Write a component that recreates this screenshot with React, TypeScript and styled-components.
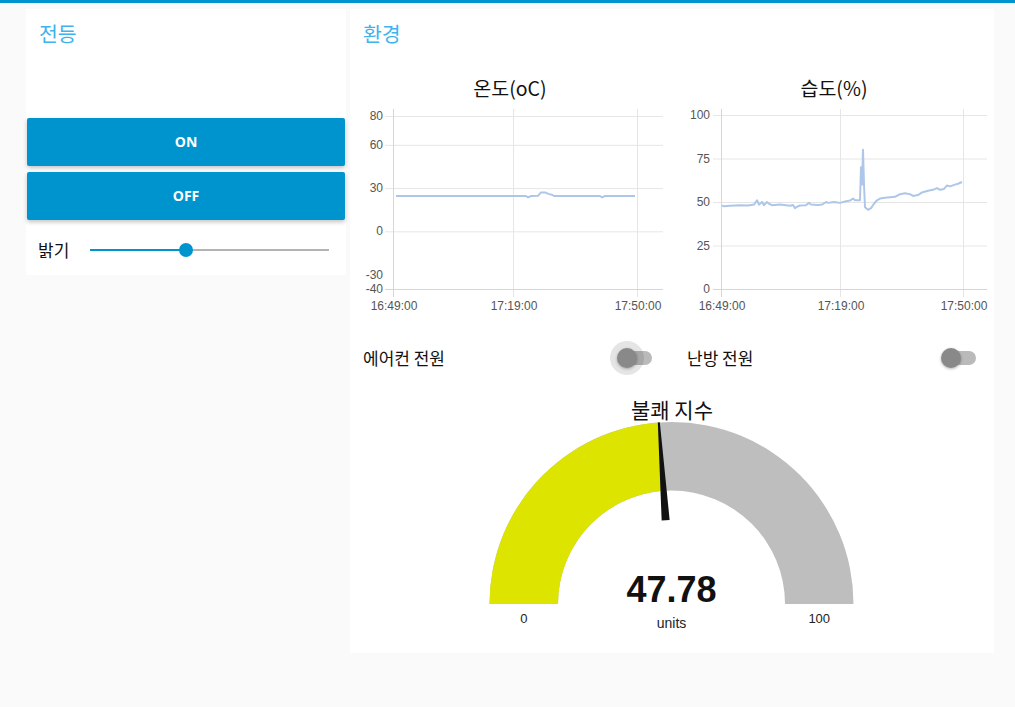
import React from "react";
import styled, { createGlobalStyle } from "styled-components";

const GlobalStyle = createGlobalStyle`
  html, body { margin: 0; padding: 0; background: #fafafa; }
  body { font-family: "Noto Sans CJK KR", "Noto Sans", sans-serif; color: #111; }
  * { box-sizing: border-box; }
`;

const TopBar = styled.div`
  height: 3px;
  background: #0094ce;
`;

const Layout = styled.main`
  display: flex;
  align-items: flex-start;
  gap: 4px;
  padding: 6px 0 0 26px;
`;

const Card = styled.section<{ $width: number }>`
  width: ${(p) => p.$width}px;
  background: #fff;
  padding: 0 1px 1px;
  display: flex;
  flex-direction: column;
  gap: 6px;
`;

const CardTitle = styled.h2`
  margin: 0;
  height: 49px;
  padding: 12px 12px 0;
  font-size: 20.5px;
  line-height: 24px;
  font-weight: 400;
  color: #3fb3ee;
`;

const Spacer = styled.div`
  height: 48px;
`;

const ActionButton = styled.button`
  height: 48px;
  width: 100%;
  border: 0;
  border-radius: 2px;
  background: #0094ce;
  color: #fff;
  font: 700 14px "Open Sans", "Liberation Sans", sans-serif;
  line-height: 46px;
  box-shadow: 0 2px 4px rgba(0, 0, 0, 0.24);
  cursor: pointer;
`;

const SliderRow = styled.div`
  height: 48px;
  display: flex;
  align-items: center;
  padding: 0 16px 0 11px;
`;

const WidgetLabel = styled.span<{ $width?: number }>`
  font-size: 17px;
  line-height: 20px;
  color: #111;
  ${(p) => (p.$width ? `width: ${p.$width}px; flex: none;` : "")}
`;

const SliderTrack = styled.div`
  position: relative;
  flex: 1;
  height: 2px;
  background: #b3b3b3;
`;

const SliderFill = styled.div<{ $value: number }>`
  width: ${(p) => p.$value}%;
  height: 100%;
  background: #0094ce;
`;

const SliderThumb = styled.div<{ $value: number }>`
  position: absolute;
  left: ${(p) => p.$value}%;
  top: 50%;
  width: 14px;
  height: 14px;
  margin: -7px 0 0 -7px;
  border-radius: 50%;
  background: #0094ce;
`;

const TwoColumns = styled.div<{ $height: number }>`
  display: grid;
  grid-template-columns: 318px 318px;
  column-gap: 6px;
  height: ${(p) => p.$height}px;
`;

const ChartWidget = styled.div`
  display: flex;
  flex-direction: column;
  height: 264px;
`;

const ChartTitle = styled.div`
  height: 44px;
  padding-top: 4px;
  line-height: 40px;
  text-align: center;
  font-size: 19.5px;
  color: #111;
`;

const ChartSvg = styled.svg`
  display: block;
  overflow: visible;
`;

const ToggleWidget = styled.div`
  height: 48px;
  display: flex;
  align-items: center;
  justify-content: space-between;
  padding: 0 17px 0 12px;
`;

const SwitchTrack = styled.span`
  position: relative;
  display: block;
  width: 34px;
  height: 14px;
  border-radius: 7px;
  background: #bababa;
`;

const SwitchThumb = styled.span<{ $focused?: boolean }>`
  position: absolute;
  left: -1px;
  top: -3px;
  width: 20px;
  height: 20px;
  border-radius: 50%;
  background: #898989;
  box-shadow: 0 1px 3px rgba(0, 0, 0, 0.3)
    ${(p) => (p.$focused ? ", 0 0 0 7px rgba(0, 0, 0, 0.1)" : "")};
`;

const GaugeWidget = styled.div`
  height: 264px;
  display: flex;
  flex-direction: column;
`;

const GaugeTitle = styled.div`
  height: 42px;
  line-height: 42px;
  text-align: center;
  font-size: 21px;
  color: #111;
`;

type YTick = { v: number; label: string; grid: boolean };
type XTick = { x: number; label: string };

type ChartProps = {
  title: string;
  left: number;
  right: number;
  top: number;
  bottom: number;
  min: number;
  max: number;
  labelX: number;
  yTicks: YTick[];
  xTicks: XTick[];
  points: [number, number][];
};

const Chart: React.FC<ChartProps> = ({ title, left, right, top, bottom, min, max, labelX, yTicks, xTicks, points }) => {
  const y = (v: number) => top + ((max - v) * (bottom - top)) / (max - min);
  const line = points.map(([x, v]) => `${x},${y(v).toFixed(2)}`).join(" ");
  return (
    <ChartWidget>
      <ChartTitle>{title}</ChartTitle>
      <ChartSvg width={318} height={220} viewBox="0 0 318 220">
        {yTicks
          .filter((t) => t.grid)
          .map((t) => (
            <line key={`g${t.v}`} x1={left - 8} x2={right} y1={y(t.v) + 0.5} y2={y(t.v) + 0.5} stroke="#e6e6e6" strokeWidth={1} />
          ))}
        {xTicks.map((t) => (
          <line key={`v${t.x}`} x1={t.x + 0.5} x2={t.x + 0.5} y1={1} y2={bottom + 8} stroke="#e6e6e6" strokeWidth={1} />
        ))}
        <line x1={left + 0.5} x2={left + 0.5} y1={1} y2={bottom + 8} stroke="#d6d6d6" />
        <line x1={left - 8} x2={right} y1={bottom + 0.5} y2={bottom + 0.5} stroke="#d6d6d6" />
        {yTicks.map((t) => (
          <text
            key={`l${t.v}`}
            x={labelX}
            y={y(t.v) + 4}
            textAnchor="end"
            fontFamily='"Liberation Sans", Arial, sans-serif'
            fontSize={12}
            fill="#555"
          >
            {t.label}
          </text>
        ))}
        {xTicks.map((t) => (
          <text
            key={`x${t.x}`}
            x={t.x + 1}
            y={bottom + 21}
            textAnchor="middle"
            fontFamily='"Liberation Sans", Arial, sans-serif'
            fontSize={12}
            fill="#555"
          >
            {t.label}
          </text>
        ))}
        <polyline points={line} fill="none" stroke="#aec7e8" strokeWidth={2} strokeLinejoin="round" />
      </ChartSvg>
    </ChartWidget>
  );
};

const tempRaw: [number, number][] = [
  [396, 24.5], [526, 24.5], [528, 23.6], [531, 24.5], [538, 24.6], [541, 27], [545, 27],
  [549, 25.8], [552, 25.4], [554, 24.5], [600, 24.5], [602, 23.6], [605, 24.5], [635, 24.5],
];

const humRaw: [number, number][] = [
  [722, 48], [724, 47.5], [730, 47.8], [740, 48.2], [748, 48], [754, 48.5], [757, 51], [759, 48.5],
  [762, 50], [764, 48.2], [767, 50], [769, 49], [772, 48.2], [780, 48.5], [790, 47.8], [793, 48.3],
  [795, 46.5], [797, 47.3], [800, 48], [806, 48.2], [809, 49.5], [811, 48.5], [818, 48.3], [822, 48.5],
  [826, 50], [828, 49.5], [834, 50], [840, 49.5], [845, 50.3], [850, 50.8], [853, 52], [855, 51],
  [860, 51], [861, 70], [862, 60], [863, 80], [864, 60], [865, 47], [868, 45.5], [871, 46.5], [874, 49],
  [877, 51], [880, 52], [885, 52.5], [895, 53], [900, 54.5], [905, 55], [910, 54.5], [913, 53.5],
  [918, 54], [922, 55.5], [928, 56.5], [933, 57], [937, 58], [940, 57], [944, 57.5], [947, 59.5],
  [950, 59], [955, 60], [958, 60.5], [962, 61.5],
];

const tempPoints = tempRaw.map(([x, v]) => [x - 351, v] as [number, number]);
const humPoints = humRaw.map(([x, v]) => [x - 675, v] as [number, number]);

const Gauge: React.FC<{ title: string; value: number; min: number; max: number; units: string }> = ({ title, value, min, max, units }) => {
  const cx = 320.5;
  const cy = 174;
  const R = 182;
  const r = 113.5;
  const frac = (value - min) / (max - min);
  const th = Math.PI * (1 - frac);
  const px = (rad: number) => cx + rad * Math.cos(th);
  const py = (rad: number) => cy - rad * Math.sin(th);
  const bg = `M ${cx - R} ${cy} A ${R} ${R} 0 0 1 ${cx + R} ${cy} L ${cx + r} ${cy} A ${r} ${r} 0 0 0 ${cx - r} ${cy} Z`;
  const fill = `M ${cx - R} ${cy} A ${R} ${R} 0 0 1 ${px(R)} ${py(R)} L ${px(r)} ${py(r)} A ${r} ${r} 0 0 0 ${cx - r} ${cy} Z`;
  const dx = Math.cos(th);
  const dy = -Math.sin(th);
  const nx = -dy;
  const ny = dx;
  const b = 84;
  const base = [cx + b * dx, cy + b * dy];
  const tip = [cx + R * dx, cy + R * dy];
  const needle = [
    [base[0] + 4 * nx, base[1] + 4 * ny],
    [tip[0] + 1 * nx, tip[1] + 1 * ny],
    [tip[0] - 1 * nx, tip[1] - 1 * ny],
    [base[0] - 4 * nx, base[1] - 4 * ny],
  ]
    .map((p) => p.map((n) => n.toFixed(2)).join(","))
    .join(" ");
  const font = '"Liberation Sans", Arial, sans-serif';
  return (
    <GaugeWidget>
      <GaugeTitle>{title}</GaugeTitle>
      <ChartSvg width={642} height={222} viewBox="0 0 642 222">
        <path d={bg} fill="#bebebe" />
        <path d={fill} fill="#dce400" />
        <polygon points={needle} fill="#111" />
        <text x={cx} y={172} textAnchor="middle" fontFamily={font} fontWeight={700} fontSize={36} fill="#111">
          {value.toFixed(2)}
        </text>
        <text x={cx} y={198} textAnchor="middle" fontFamily={font} fontSize={14} fill="#222">
          {units}
        </text>
        <text x={cx - (R + r) / 2} y={193} textAnchor="middle" fontFamily={font} fontSize={13} fill="#222">
          {min}
        </text>
        <text x={cx + (R + r) / 2} y={193} textAnchor="middle" fontFamily={font} fontSize={13} fill="#222">
          {max}
        </text>
      </ChartSvg>
    </GaugeWidget>
  );
};

export default function App() {
  const brightness = 40.2;
  return (
    <>
      <GlobalStyle />
      <TopBar />
      <Layout>
        <Card $width={320}>
          <CardTitle>전등</CardTitle>
          <Spacer />
          <ActionButton>ON</ActionButton>
          <ActionButton>OFF</ActionButton>
          <SliderRow>
            <WidgetLabel $width={52}>밝기</WidgetLabel>
            <SliderTrack>
              <SliderFill $value={brightness} />
              <SliderThumb $value={brightness} />
            </SliderTrack>
          </SliderRow>
        </Card>
        <Card $width={644}>
          <CardTitle>환경</CardTitle>
          <TwoColumns $height={264}>
            <Chart
              title="온도(oC)"
              left={42}
              right={312}
              top={8}
              bottom={181}
              min={-40}
              max={80}
              labelX={32}
              yTicks={[
                { v: 80, label: "80", grid: true },
                { v: 60, label: "60", grid: true },
                { v: 30, label: "30", grid: true },
                { v: 0, label: "0", grid: true },
                { v: -30, label: "-30", grid: false },
                { v: -40, label: "-40", grid: false },
              ]}
              xTicks={[
                { x: 42, label: "16:49:00" },
                { x: 162, label: "17:19:00" },
                { x: 286, label: "17:50:00" },
              ]}
              points={tempPoints}
            />
            <Chart
              title="습도(%)"
              left={46}
              right={312}
              top={7}
              bottom={181}
              min={0}
              max={100}
              labelX={35}
              yTicks={[
                { v: 100, label: "100", grid: true },
                { v: 75, label: "75", grid: true },
                { v: 50, label: "50", grid: true },
                { v: 25, label: "25", grid: true },
                { v: 0, label: "0", grid: false },
              ]}
              xTicks={[
                { x: 46, label: "16:49:00" },
                { x: 165, label: "17:19:00" },
                { x: 288, label: "17:50:00" },
              ]}
              points={humPoints}
            />
          </TwoColumns>
          <TwoColumns $height={48}>
            <ToggleWidget>
              <WidgetLabel>에어컨 전원</WidgetLabel>
              <SwitchTrack>
                <SwitchThumb $focused />
              </SwitchTrack>
            </ToggleWidget>
            <ToggleWidget>
              <WidgetLabel>난방 전원</WidgetLabel>
              <SwitchTrack>
                <SwitchThumb />
              </SwitchTrack>
            </ToggleWidget>
          </TwoColumns>
          <Gauge title="불쾌 지수" value={47.78} min={0} max={100} units="units" />
        </Card>
      </Layout>
    </>
  );
}
